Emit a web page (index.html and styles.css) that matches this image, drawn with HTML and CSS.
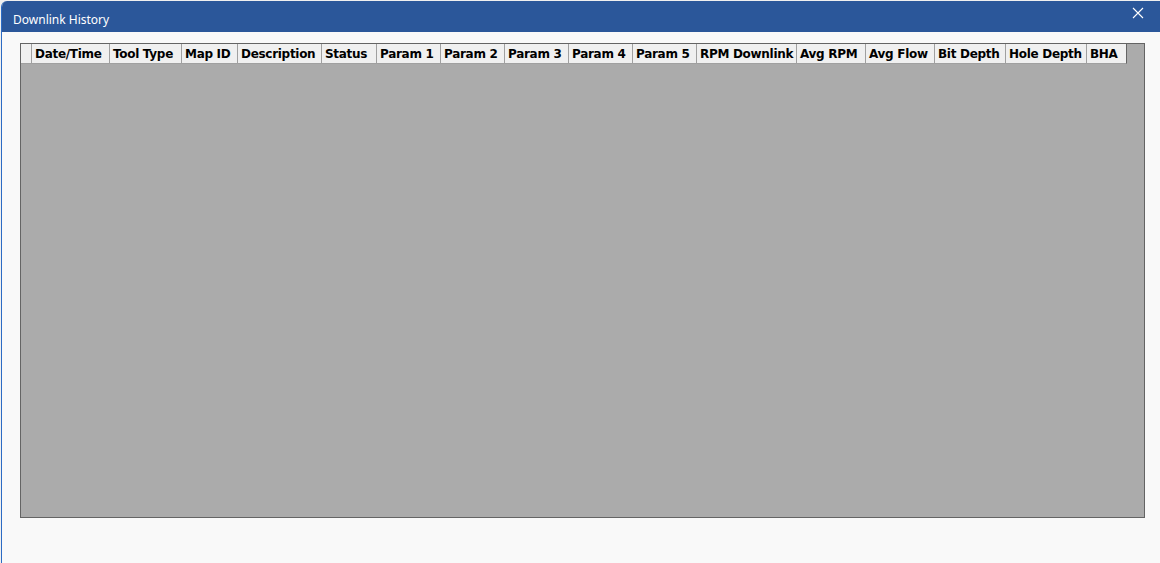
FILE: index.html
```html
<!DOCTYPE html>
<html lang="en">
<head>
  <meta charset="UTF-8">
  <title>Downlink History</title>
  <link rel="stylesheet" href="styles.css">
</head>
<body>
  <div class="window">
    <div class="titlebar">
      <span class="title">Downlink History</span>
      <!-- close button -->
      <svg class="close" width="12" height="12" viewBox="0 0 12 12">
        <path d="M1 1 L11 11 M11 1 L1 11" stroke="#fff" stroke-width="1.1" fill="none"/>
      </svg>
    </div>
    <div class="content">
      <div class="grid">
        <div class="header">
          <div class="cell rowhead"></div>
          <div class="cell c-date">Date/Time</div>
          <div class="cell c-tool">Tool Type</div>
          <div class="cell c-map">Map ID</div>
          <div class="cell c-desc">Description</div>
          <div class="cell c-status">Status</div>
          <div class="cell c-param">Param 1</div>
          <div class="cell c-param">Param 2</div>
          <div class="cell c-param">Param 3</div>
          <div class="cell c-param">Param 4</div>
          <div class="cell c-param">Param 5</div>
          <div class="cell c-rpm">RPM Downlink</div>
          <div class="cell c-avgrpm">Avg RPM</div>
          <div class="cell c-flow">Avg Flow</div>
          <div class="cell c-bit">Bit Depth</div>
          <div class="cell c-hole">Hole Depth</div>
          <div class="cell c-bha">BHA</div>
        </div>
      </div>
    </div>
  </div>
</body>
</html>
```

FILE: styles.css
```css
html, body {
  margin: 0;
  height: 100%;
}
body {
  background-color: #f0f0f0;
  padding-top: 1px;
  padding-left: 1px;
  box-sizing: border-box;
  overflow: hidden;
}
.window {
  height: 562px;
  background-color: #f9f9f9;
  border-left: 1px solid #2c6bc4;
  border-top-left-radius: 6px;
  overflow: hidden;
  display: flex;
  flex-direction: column;
}
.titlebar {
  height: 31px;
  background-color: #2b579a;
  display: flex;
  align-items: center;
  justify-content: space-between;
  padding: 0 16px 0 11px;
  flex-shrink: 0;
}
.title {
  color: #fff;
  font-family: "Noto Sans", "Open Sans", sans-serif;
  font-size: 12px;
  margin-top: 6px;
}
.close {
  margin-top: -7px;
}
.content {
  padding: 11px 15px 0 18px;
}
.grid {
  height: 473px;
  background-color: #ababab;
  border: 1px solid #646464;
}
.header {
  display: flex;
  height: 20px;
}
.cell {
  box-sizing: border-box;
  height: 20px;
  background-color: #f0f0f0;
  border-right: 1px solid #a0a0a0;
  border-bottom: 1px solid #a0a0a0;
  font-family: "DejaVu Sans", Verdana, sans-serif;
  font-weight: bold;
  font-size: 12px;
  letter-spacing: -0.3px;
  color: #000;
  line-height: 20px;
  padding-left: 3px;
  white-space: nowrap;
  overflow: hidden;
}
.rowhead { width: 11px; }
.c-date { width: 78px; }
.c-tool { width: 72px; }
.c-map { width: 56px; }
.c-desc { width: 84px; }
.c-status { width: 55px; }
.c-param { width: 64px; }
.c-rpm { width: 100px; }
.c-avgrpm { width: 69px; }
.c-flow { width: 69px; }
.c-bit { width: 71px; }
.c-hole { width: 81px; }
.c-bha { width: 40px; border-right-color: #646464; }
```
